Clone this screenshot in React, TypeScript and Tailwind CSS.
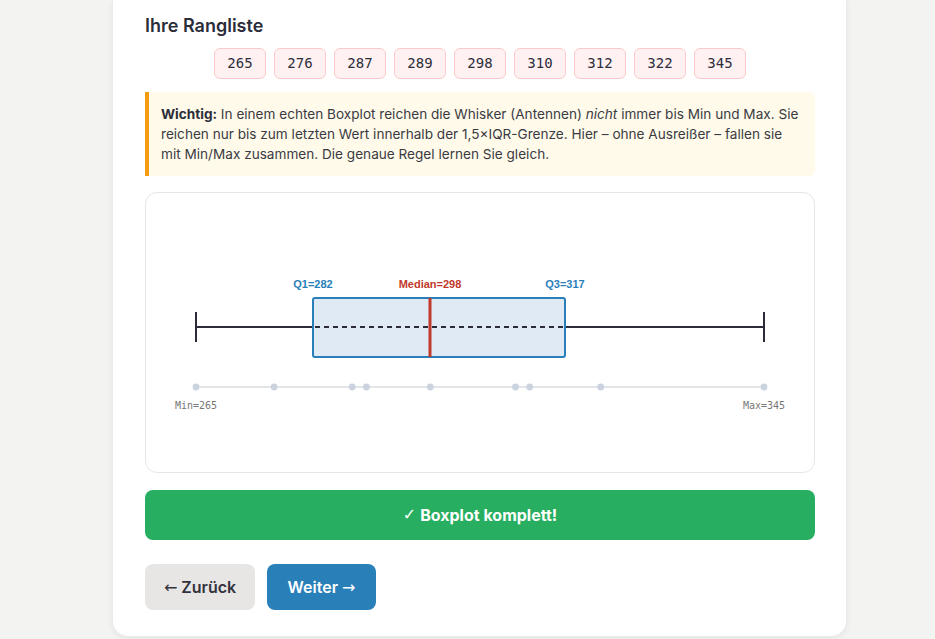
import React from "react";

const values = [265, 276, 287, 289, 298, 310, 312, 322, 345];
const xOf = (v: number) => 50 + (v - 265) * 7.1;

function Chart() {
  return (
    <svg width="668" height="279" viewBox="0 0 668 279" className="block">
      <line x1={50} y1={194} x2={618} y2={194} stroke="#e2e4e8" strokeWidth={2} />
      {values.map((v, i) => (
        <circle key={i} cx={xOf(v)} cy={194} r={3.4} fill="#cbd3df" />
      ))}
      <text x={50} y={216} textAnchor="middle" fontFamily="'DejaVu Sans Mono', monospace" fontSize={10} fill="#777">Min=265</text>
      <text x={618} y={216} textAnchor="middle" fontFamily="'DejaVu Sans Mono', monospace" fontSize={10} fill="#777">Max=345</text>
      <line x1={50} y1={134} x2={167} y2={134} stroke="#2b2b3a" strokeWidth={2} />
      <line x1={419} y1={134} x2={618} y2={134} stroke="#2b2b3a" strokeWidth={2} />
      <line x1={50} y1={119} x2={50} y2={149} stroke="#2b2b3a" strokeWidth={2} />
      <line x1={618} y1={119} x2={618} y2={149} stroke="#2b2b3a" strokeWidth={2} />
      <rect x={167} y={105} width={252} height={59} rx={2} fill="#dfeaf5" stroke="#2980b9" strokeWidth={2} />
      <line x1={169} y1={134} x2={417} y2={134} stroke="#2b2b3a" strokeWidth={2} strokeDasharray="5 4" />
      <line x1={284} y1={105} x2={284} y2={164} stroke="#c0392b" strokeWidth={3} />
      <text x={167} y={95} textAnchor="middle" fontFamily="'Liberation Sans', Arial, sans-serif" fontWeight={700} fontSize={11} fill="#2980b9">Q1=282</text>
      <text x={284} y={95} textAnchor="middle" fontFamily="'Liberation Sans', Arial, sans-serif" fontWeight={700} fontSize={11} fill="#c0392b">Median=298</text>
      <text x={419} y={95} textAnchor="middle" fontFamily="'Liberation Sans', Arial, sans-serif" fontWeight={700} fontSize={11} fill="#2980b9">Q3=317</text>
    </svg>
  );
}

const glyph = { fontFamily: "'DejaVu Sans', sans-serif", fontWeight: 400 } as const;

export default function App() {
  return (
    <div className="min-h-screen bg-[#f3f3f1] flex" style={{ fontFamily: "Inter, 'Noto Sans', sans-serif" }}>
      <div className="ml-[112px] w-[735px] bg-white rounded-b-2xl border border-t-0 border-[#ebebea] shadow-[0_2px_6px_rgba(0,0,0,0.06)] pl-[32px] pr-[31px] pt-[14px] pb-[27px] h-[637px]">
        <h2 className="text-[18px] font-semibold text-[#2b2d3a] leading-[24px]">Ihre Rangliste</h2>
        <div className="flex justify-center gap-2 mt-[10px]">
          {values.map((v) => (
            <div
              key={v}
              className="w-[52px] h-[31px] flex items-center justify-center rounded-md bg-[#fff1f1] border border-[#fccaca] text-[14px] text-[#2b2d3a]"
              style={{ fontFamily: "'DejaVu Sans Mono', monospace" }}
            >
              {v}
            </div>
          ))}
        </div>
        <div className="mt-[13px] bg-[#fffae9] border-l-4 border-[#f39c12] rounded-r-md py-3 pl-3 pr-3 text-[13.6px] leading-[20px] text-[#3a3a44]">
          <strong className="font-bold text-[#2b2d3a]">Wichtig:</strong> In einem echten Boxplot reichen die Whisker (Antennen) <em>nicht</em> immer bis Min und Max. Sie reichen nur bis zum letzten Wert innerhalb der 1,5×IQR-Grenze. Hier – ohne Ausreißer – fallen sie mit Min/Max zusammen. Die genaue Regel lernen Sie gleich.
        </div>
        <div className="mt-4 border border-[#e6e6e6] rounded-xl bg-white">
          <Chart />
        </div>
        <div className="mt-[17px] h-[50px] rounded-lg bg-[#27ae60] flex items-center justify-center text-white text-[16px] font-bold">
          <span style={glyph} className="mr-1">✓</span>Boxplot komplett!
        </div>
        <div className="mt-6 flex gap-3">
          <button className="w-[110px] h-[46px] rounded-lg bg-[#e8e6e4] text-[#33333d] text-[16px] font-semibold">
            <span style={glyph} className="mr-1">←</span>Zurück
          </button>
          <button className="w-[109px] h-[46px] rounded-lg bg-[#2980b9] text-white text-[16px] font-semibold">
            Weiter<span style={glyph} className="ml-1">→</span>
          </button>
        </div>
      </div>
    </div>
  );
}
